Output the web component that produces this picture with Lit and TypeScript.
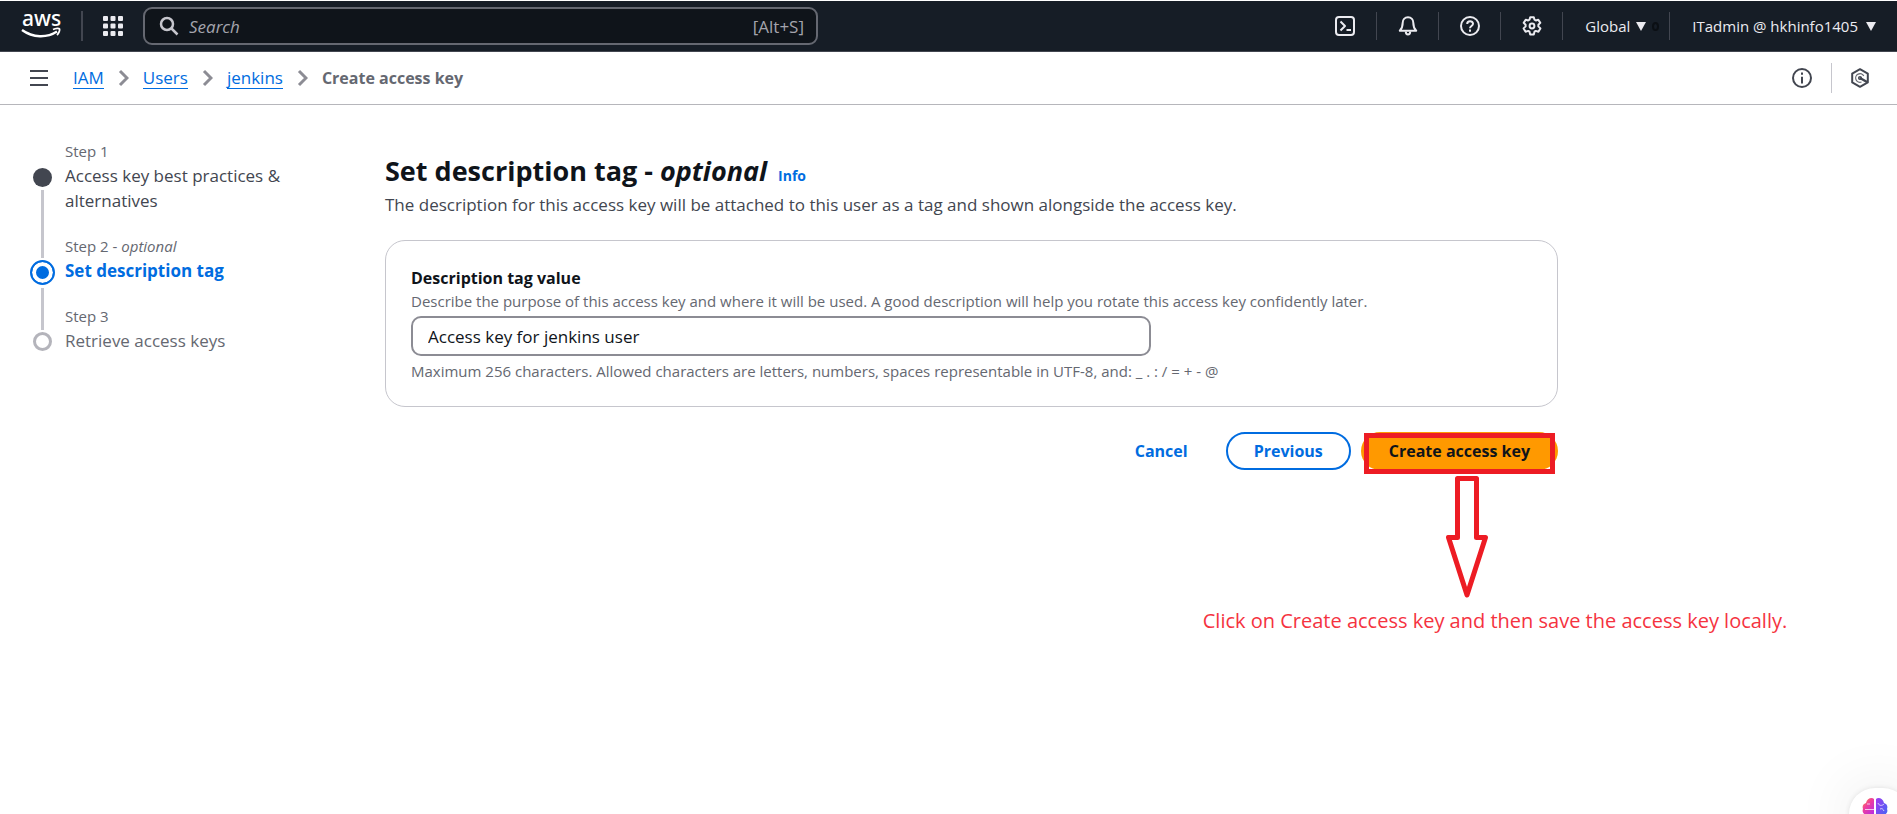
import { LitElement, html, css, svg, nothing } from "lit";
import { customElement, state } from "lit/decorators.js";
import { classMap } from "lit/directives/class-map.js";

const icon = (paths: unknown, cls = "icon") =>
  html`<svg class=${cls} viewBox="0 0 20 20" aria-hidden="true">${paths}</svg>`;

const ICONS = {
  terminal: svg`<rect x="1" y="1" width="18" height="18" rx="3"/><path d="M5.500 5.500 10 10l-4.500 4.500M11.500 14h4.500"/>`,
  bell: svg`<path d="M10 1.200c-3.300 0-5.300 2.500-5.300 5.500 0 4-1 6-2.900 8h16.400c-1.900-2-2.900-4-2.900-8 0-3-2-5.500-5.300-5.500Z"/><path d="M7.800 15.500c0 4 4.400 4 4.400 0"/>`,
  help: svg`<circle cx="10" cy="10" r="9"/><path d="M7.200 8c0-3.600 5.800-3.600 5.800-.2 0 2.300-3 2.200-3 4.500"/><path d="M10 13.600v2.200"/>`,
  gear: svg`<path d="M8.200 1.200h3.600l.7 2.500 1.300.8 2.500-.8 2 3.200-1.900 1.900v1.600l2 2-2 3.300-2.600-.8-1.300.8-.7 2.900H8.200l-.7-2.900-1.300-.8-2.600.8-2-3.300 2-2V8.800L1.700 6.900l2-3.200 2.500.8 1.300-.8Z"/><circle cx="10" cy="10" r="2.400"/>`,
  info: svg`<circle cx="10" cy="10" r="9"/><path d="M10 4.500v2.300M10 8.700v6.800"/>`,
  hex: svg`<path d="M10 1.200 17.800 5.600v8.800L10 18.800l-7.800-4.400V5.600Z"/><path d="M13.800 8a4.300 4.300 0 1 0-2.300 6" stroke-width="1.200" stroke-opacity=".8"/><circle cx="10" cy="10" r="1.300" stroke-width="1.500"/><path d="m10 10 7 4" stroke-width="2.400"/>`,
};

interface Step { label: string; optional?: boolean; title: string; status: "done" | "current" | "next"; }

@customElement("app-root")
export class AppRoot extends LitElement {
  static styles = css`
    :host {
      display: block; position: relative; min-height: 100vh; overflow: hidden; box-sizing: border-box;
      padding-top: 1px; background: #fff; color: #0f141a;
      font: 17px/25px "Open Sans", "Noto Sans", sans-serif;
    }
    * { box-sizing: border-box; }
    button, input { font: inherit; color: inherit; margin: 0; }
    button { cursor: pointer; border: 0; background: none; padding: 0; }
    a { color: #006ce0; text-decoration: none; }
    h1, p, ol, ul { margin: 0; padding: 0; }
    ol, ul { list-style: none; }
    .icon { display: block; width: 20px; height: 20px; fill: none; stroke: currentColor; stroke-width: 2; stroke-linejoin: round; }

    .topbar { display: flex; align-items: center; height: 51px; padding: 0 20px; background: #161d26; border-bottom: 1px solid #424650; color: #ebebf0; }
    .logo { display: block; width: 42px; height: 36px; }
    .logo text { font: 500 21px "Noto Sans", sans-serif; fill: #fff; }
    .rule { width: 2px; height: 30px; background: #424650; margin: 0 20px 0 19px; }
    .apps { width: 20px; height: 20px; margin-right: 20px; }
    .apps svg { fill: currentColor; stroke: none; }
    .search { display: flex; align-items: center; flex: 0 1 675px; height: 38px; padding: 0 12px 0 14px; border: 2px solid #656871; border-radius: 9px; background: #0f141a; }
    .search .icon { stroke: #c6c6cd; stroke-width: 2.500; flex: none; }
    .search input { flex: 1; min-width: 0; border: 0; outline: 0; background: none; padding: 0 10px; }
    .search input::placeholder { color: #a4a4ad; font-style: italic; opacity: 1; }
    .search kbd { font: inherit; color: #a4a4ad; }
    .tools { display: flex; align-items: center; margin-left: auto; }
    .tools > * + * { border-left: 1px solid #424650; }
    .tool { display: flex; align-items: center; justify-content: center; width: 62px; height: 28px; }
    .menu { display: flex; align-items: center; gap: 8px; height: 28px; padding: 0 22px; font-size: 15px; font-weight: 500; white-space: nowrap; }
    .menu:last-child { padding-right: 1px; }
    .caret { width: 10px; height: 9px; fill: currentColor; }
    .dot { width: 7px; height: 9px; border: 2px solid #0b0f14; border-radius: 50%; }
    .region { gap: 6px; padding-right: 10px; }

    .crumbbar { display: flex; align-items: center; height: 53px; padding: 0 27px 0 29px; border-bottom: 1px solid #b6b6bb; color: #424650; }
    .crumbs { display: flex; align-items: center; gap: 14px; margin-left: 24px; }
    .crumbs li { display: flex; align-items: center; gap: 14px; }
    .crumbs a { line-height: 21px; border-bottom: 1px solid #006ce0; }
    .crumbs b { font-size: 16px; font-weight: 700; color: #656871; }
    .chevron { width: 11px; height: 18px; fill: none; stroke: #8c8c94; stroke-width: 3; }
    .panels { display: flex; align-items: center; margin-left: auto; }
    .panels button + button { border-left: 1px solid #c6c6cd; margin-left: 19px; padding-left: 18px; height: 30px; }

    .page { display: grid; grid-template-columns: 305px minmax(0, 1173px); column-gap: 50px; padding: 35px 30px 0; }
    .step { display: grid; grid-template-columns: 25px 1fr; column-gap: 10px; }
    .rail { display: flex; flex-direction: column; align-items: center; }
    .steps small { display: block; font-size: 15px; line-height: 23px; color: #656871; }
    .text { padding-bottom: 22px; max-width: 225px; }
    .step b { display: block; font-weight: 400; color: #424650; }
    .current b { font-weight: 700; color: #006ce0; }
    .next b { color: #656871; }
    .mark { flex: none; width: 19px; height: 19px; margin: 28px 0 0; border-radius: 50%; border: 3px solid #b4b4bb; }
    .done .mark { border: 0; background: #424650; }
    .current .mark { width: 25px; height: 25px; margin-top: 2px; border: 2px solid #006ce0; background: #006ce0; box-shadow: inset 0 0 0 4px #fff; }
    .line { flex: 1; width: 3px; margin-top: 3px; background: #c6c6cd; }
    .lead { width: 3px; height: 23px; background: #c6c6cd; }
    .next .lead { height: 25px; }
    .next .mark { margin-top: 2px; }

    .head { padding: 12px 0 20px; }
    h1 { font-size: 27px; line-height: 38px; font-weight: 700; }
    h1 a { font-size: 14px; line-height: 14px; margin-left: 4px; }
    .head p { line-height: 30px; color: #424650; }
    .card { padding: 25px; border: 1px solid #c6c6cd; border-radius: 20px; }
    .card label { display: block; font-size: 16px; font-weight: 700; }
    .hint { font-size: 15px; line-height: 20px; color: #656871; }
    .field { display: block; width: 66%; height: 40px; margin: 5px 0; padding: 0 15px; border: 2px solid #8c8c94; border-radius: 10px; background: #fff; outline: 0; }
    .actions { display: flex; justify-content: flex-end; align-items: center; gap: 10px; padding-top: 25px; font-size: 16px; font-weight: 700; }
    .btn { height: 38px; padding: 0 26px; border: 2px solid transparent; border-radius: 20px; color: #006ce0; }
    .outlined { border-color: #006ce0; }
    .primary { background: #ff9900; color: #0f141a; }
    .target { position: relative; }
    .frame { position: absolute; inset: 1px 3px -4px; border: 5px solid #ed1c24; pointer-events: none; }
    .arrow { position: absolute; left: 85px; top: 44px; width: 42px; height: 123px; fill: #fff; stroke: #ed1c24; stroke-width: 5; stroke-linejoin: round; }
    .note { position: absolute; left: -158px; top: 175px; font-size: 20px; line-height: 28px; font-weight: 400; color: #f5333f; white-space: nowrap; }

    .assistant { display: flex; align-items: flex-start; position: absolute; right: -12px; bottom: -26px; width: 60px; height: 52px; padding: 9px 0 0 13px; border-radius: 26px; background: #fff; box-shadow: 0 0 5px rgba(0,0,0,.1), 0 0 60px rgba(0,0,0,.1); }
    .assistant svg { display: block; width: 26px; height: 24px; }
  `;

  @state() private description = "Access key for jenkins user";

  private steps: Step[] = [
    { label: "Step 1", title: "Access key best practices & alternatives", status: "done" },
    { label: "Step 2", optional: true, title: "Set description tag", status: "current" },
    { label: "Step 3", title: "Retrieve access keys", status: "next" },
  ];

  private caret = html`<svg class="caret" viewBox="0 0 10 9" aria-hidden="true"><path d="M0 0h10L5 9Z"/></svg>`;

  private renderTopbar() {
    return html`<header class="topbar">
      <a href="#" aria-label="AWS home"><svg class="logo" viewBox="0 0 42 36">
        <text x="2" y="18">aws</text>
        <path d="M2 22c11 8 25 8 35 1.500" fill="none" stroke="#fff" stroke-width="2.400"/>
        <path d="M33 21.500c3-1.500 6-1.500 6.500-.5s-.5 4-2.500 6" fill="none" stroke="#fff" stroke-width="1.800"/>
      </svg></a>
      <span class="rule"></span>
      <button class="apps" aria-label="Services">${icon([0, 7.5, 15].map((y) => [0, 7.5, 15].map((x) => svg`<rect x=${x} y=${y} width="5" height="5" rx="1"/>`)))}</button>
      <div class="search">
        ${icon(svg`<circle cx="8" cy="8" r="6"/><path d="m12.500 12.500 6 6"/>`)}
        <input type="search" placeholder="Search" aria-label="Search" />
        <kbd>[Alt+S]</kbd>
      </div>
      <div class="tools">
        <button class="tool" aria-label="CloudShell">${icon(ICONS.terminal)}</button>
        <button class="tool" aria-label="Notifications">${icon(ICONS.bell)}</button>
        <button class="tool" aria-label="Help">${icon(ICONS.help)}</button>
        <button class="tool" aria-label="Settings">${icon(ICONS.gear)}</button>
        <button class="menu region">Global ${this.caret}<span class="dot"></span></button>
        <button class="menu">ITadmin @ hkhinfo1405 ${this.caret}</button>
      </div>
    </header>`;
  }

  private renderCrumbs() {
    return html`<div class="crumbbar">
      <button aria-label="Open navigation">${icon(svg`<path d="M1 3h18M1 10h18M1 17h18"/>`)}</button>
      <nav aria-label="Breadcrumbs"><ol class="crumbs">
        ${["IAM", "Users", "jenkins"].map((name) => html`<li><a href="#">${name}</a>
          <svg class="chevron" viewBox="0 0 11 18" aria-hidden="true"><path d="m2 2 7 7-7 7"/></svg></li>`)}
        <li><b>Create access key</b></li>
      </ol></nav>
      <div class="panels">
        <button aria-label="Info panel">${icon(ICONS.info)}</button>
        <button aria-label="Assistant panel">${icon(ICONS.hex)}</button>
      </div>
    </div>`;
  }

  private renderStep(s: Step, last: boolean) {
    return html`<li class=${classMap({ step: true, [s.status]: true })}>
      <span class="rail">
        ${s.status === "done" ? nothing : html`<span class="lead"></span>`}
        <span class="mark"></span>
        ${last ? nothing : html`<span class="line"></span>`}
      </span>
      <div class="text"><small>${s.label}${s.optional ? html` - <i>optional</i>` : nothing}</small><b>${s.title}</b></div>
    </li>`;
  }

  render() {
    return html`
      ${this.renderTopbar()} ${this.renderCrumbs()}
      <main class="page">
        <ol class="steps">${this.steps.map((s, i) => this.renderStep(s, i === this.steps.length - 1))}</ol>
        <section>
          <div class="head">
            <h1>Set description tag - <i>optional</i> <a href="#">Info</a></h1>
            <p>The description for this access key will be attached to this user as a tag and shown alongside the access key.</p>
          </div>
          <div class="card">
            <label for="description">Description tag value</label>
            <p class="hint">Describe the purpose of this access key and where it will be used. A good description will help you rotate this access key confidently later.</p>
            <input id="description" class="field" type="text" maxlength="256" .value=${this.description}
              @input=${(e: Event) => (this.description = (e.target as HTMLInputElement).value)} />
            <p class="hint">Maximum 256 characters. Allowed characters are letters, numbers, spaces representable in UTF-8, and: _ . : / = + - @</p>
          </div>
          <div class="actions">
            <button class="btn">Cancel</button>
            <button class="btn outlined">Previous</button>
            <div class="target">
              <button class="btn primary">Create access key</button>
              <span class="frame"></span>
              <svg class="arrow" viewBox="0 0 42 123" aria-hidden="true"><path d="M11.500 2.500h19V61.500H39.500L21 119 2.500 61.500h9Z"/></svg>
              <span class="note">Click on Create access key and then save the access key locally.</span>
            </div>
          </div>
        </section>
      </main>
      <button class="assistant" aria-label="Assistant">
        <svg viewBox="0 0 26 24">
          <defs><linearGradient id="l" x1="0" y1="0" x2=".6" y2="1"><stop offset="0" stop-color="#ff9d2e"/><stop offset=".4" stop-color="#f0409a"/><stop offset="1" stop-color="#b52be8"/></linearGradient>
          <linearGradient id="r" x1="0" y1="0" x2="1" y2="1"><stop offset="0" stop-color="#a03bf0"/><stop offset="1" stop-color="#3a6cf5"/></linearGradient></defs>
          <path fill="url(#l)" d="M12 2v20c-4 2-8 0-8-4-3-1-4-4-3-6-1-3 0-5 3-6 1-5 6-6 8-4Z"/>
          <path fill="url(#r)" d="M14 2v20c4 2 8 0 8-4 3-1 4-4 3-6 1-3 0-5-3-6-1-5-6-6-8-4Z"/>
          <path d="M3 12.500h9M5 7h3M16 6c1 3 4 3 6 1M18 12c2-1 3 0 4 2" stroke="#fff" stroke-opacity=".7" fill="none"/>
        </svg>
      </button>`;
  }
}
